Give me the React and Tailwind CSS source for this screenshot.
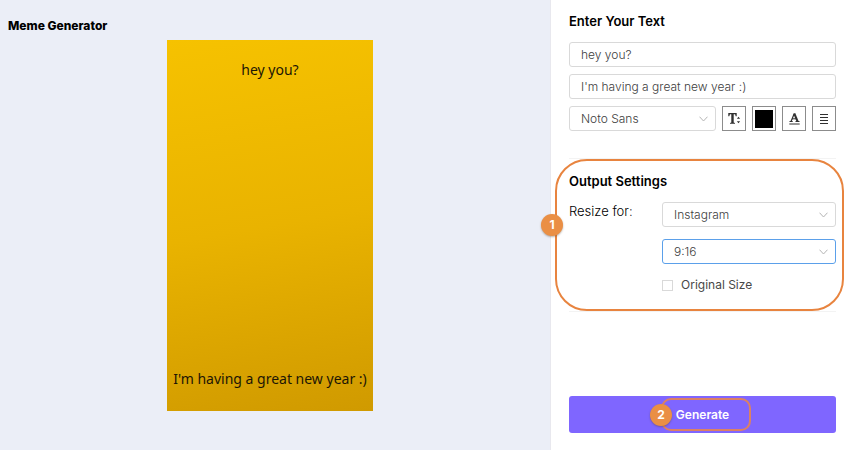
import { useState } from "react";

const field =
  "w-full h-[25px] rounded-[3px] border border-[#d9d9d9] bg-white pl-[11px] text-xs font-light text-[#404040] outline-none";

const tool =
  "flex h-[25px] w-6 shrink-0 items-center justify-center border border-[#8c8c8c] bg-white text-[#303030]";

function Select({ id, label, options, active }) {
  return (
    <div className="relative min-w-0 flex-1">
      <select
        id={id}
        aria-label={label}
        className={
          active
            ? "block h-[25px] w-full appearance-none rounded-[3px] border border-[#5ba0ea] bg-white pl-[11px] text-xs font-light text-[#404040] outline-none"
            : "block h-[25px] w-full appearance-none rounded-[3px] border border-[#d9d9d9] bg-white pl-[11px] text-xs font-light text-[#404040] outline-none"
        }
      >
        {options.map((o) => (
          <option key={o}>{o}</option>
        ))}
      </select>
      <svg
        width="9"
        height="6"
        viewBox="0 0 9 6"
        fill="none"
        stroke="currentColor"
        className="pointer-events-none absolute inset-y-0 right-2 my-auto text-[#b4b4b4]"
      >
        <path d="M.5 .7l4 4.300 4-4.300" />
      </svg>
    </div>
  );
}

function Badge({ children }) {
  return (
    <span className="flex size-[22px] items-center justify-center rounded-full bg-[#ea8f45] text-xs font-bold text-white shadow-[0_1px_2px_rgba(80,60,40,0.4)]">
      {children}
    </span>
  );
}

export default function App() {
  const [top, setTop] = useState("hey you?");
  const [bottom, setBottom] = useState("I'm having a great new year :)");

  return (
    <div className="flex min-h-screen bg-white font-['Inter',sans-serif] text-black">
      <main className="flex min-w-0 flex-1 flex-col bg-[#ebeef7] pt-4 pr-[18px] pl-2">
        <h1 className="text-xs leading-5 font-extrabold">Meme Generator</h1>
        <div className="mt-1 flex aspect-[206/371] w-[206px] flex-col justify-between self-center bg-linear-170 from-[#f6c200] via-[#e9b300] to-[#d09a00] pt-5 pb-[22px] text-center font-['Noto_Sans',sans-serif] text-sm text-[#1c1605]">
          <p>{top}</p>
          <p className="whitespace-nowrap">{bottom}</p>
        </div>
      </main>

      <aside className="flex w-[300px] shrink-0 flex-col border-l border-[#e8e8ee] pt-3 pr-[14px] pb-[17px] pl-[18px]">
        <section className="border-b border-[#f3f3f3] pb-[27px]">
          <h2 className="text-[13px] leading-[18px] font-semibold">Enter Your Text</h2>
          <div className="mt-3 flex flex-col gap-[7px]">
            <input aria-label="Top text" className={field} value={top} onChange={(e) => setTop(e.target.value)} />
            <input aria-label="Bottom text" className={field} value={bottom} onChange={(e) => setBottom(e.target.value)} />
            <div className="flex items-center gap-1.5">
              <Select id="font" label="Font" options={["Noto Sans", "Open Sans", "Roboto"]} />
              <button type="button" aria-label="Text size" className={tool}>
                <svg width="13" height="13" viewBox="0 0 13 13" fill="currentColor">
                  <path d="M.3 1h8.400v3.200h-1L7.100 2.300H5.700V10.500L7 11v.8H2V11l1.300-.5V2.300H1.900L1.300 4.200h-1z" />
                  <path d="M10.500 4.700l1.600 2H8.900zM10.500 11.300l-1.600-2h3.200z" />
                </svg>
              </button>
              <button type="button" aria-label="Text colour" className={tool}>
                <span className="size-[18px] bg-black" />
              </button>
              <button type="button" aria-label="Outline colour" className={tool}>
                <svg width="13" height="13" viewBox="0 0 13 13" fill="none" stroke="currentColor">
                  <path d="M3 9.500L6.300 1.500" strokeWidth="1.200" />
                  <path d="M6.300 1.500l3.300 8" strokeWidth="2" />
                  <path d="M4 6.800h4.700M1.500 9.500h3.200M7.500 9.500h4M1.300 12h10.400" />
                </svg>
              </button>
              <button type="button" aria-label="Alignment" className={tool}>
                <svg width="10" height="11" viewBox="0 0 10 11" stroke="currentColor" strokeWidth="1">
                  <path d="M1 1.500h8M1 4.500h8M1 7.500h8M1 10.500h8" />
                </svg>
              </button>
            </div>
          </div>
        </section>

        <section className="relative border-b border-[#f3f3f3] pt-[13px] pb-[17px]">
          <h2 className="text-[13px] leading-[18px] font-semibold">Output Settings</h2>
          <div className="mt-3 flex">
            <label htmlFor="platform" className="w-[93px] shrink-0 text-[13px] leading-[18px] font-light">
              Resize for:
            </label>
            <div className="flex min-w-0 flex-1 flex-col">
              <Select id="platform" options={["Instagram", "Facebook", "Twitter"]} />
              <div className="mt-3 flex">
                <Select id="ratio" label="Aspect ratio" options={["9:16", "1:1", "4:5"]} active />
              </div>
              <label className="mt-3 flex items-center gap-2 text-xs leading-[18px] text-[#484848]">
                <input type="checkbox" className="size-[11px] appearance-none border border-[#d9d9d9] bg-white checked:bg-[#7f66ff]" />
                Original Size
              </label>
            </div>
          </div>
          <div className="pointer-events-none absolute inset-y-0 -right-2 -left-[14px] rounded-[32px] border-2 border-[#e8843f]">
            <div className="absolute top-[53px] -left-4">
              <Badge>1</Badge>
            </div>
          </div>
        </section>

        <div className="relative mt-auto">
          <button
            type="button"
            className="flex h-[37px] w-full items-center justify-center rounded-[3px] bg-[#7f66ff] text-xs font-semibold text-white"
          >
            Generate
          </button>
          <div className="pointer-events-none absolute inset-y-[2px] left-[92px] w-[90px] rounded-[10px] border-2 border-[#dc8163]">
            <div className="absolute inset-y-0 -left-[13px] flex items-center">
              <Badge>2</Badge>
            </div>
          </div>
        </div>
      </aside>
    </div>
  );
}
